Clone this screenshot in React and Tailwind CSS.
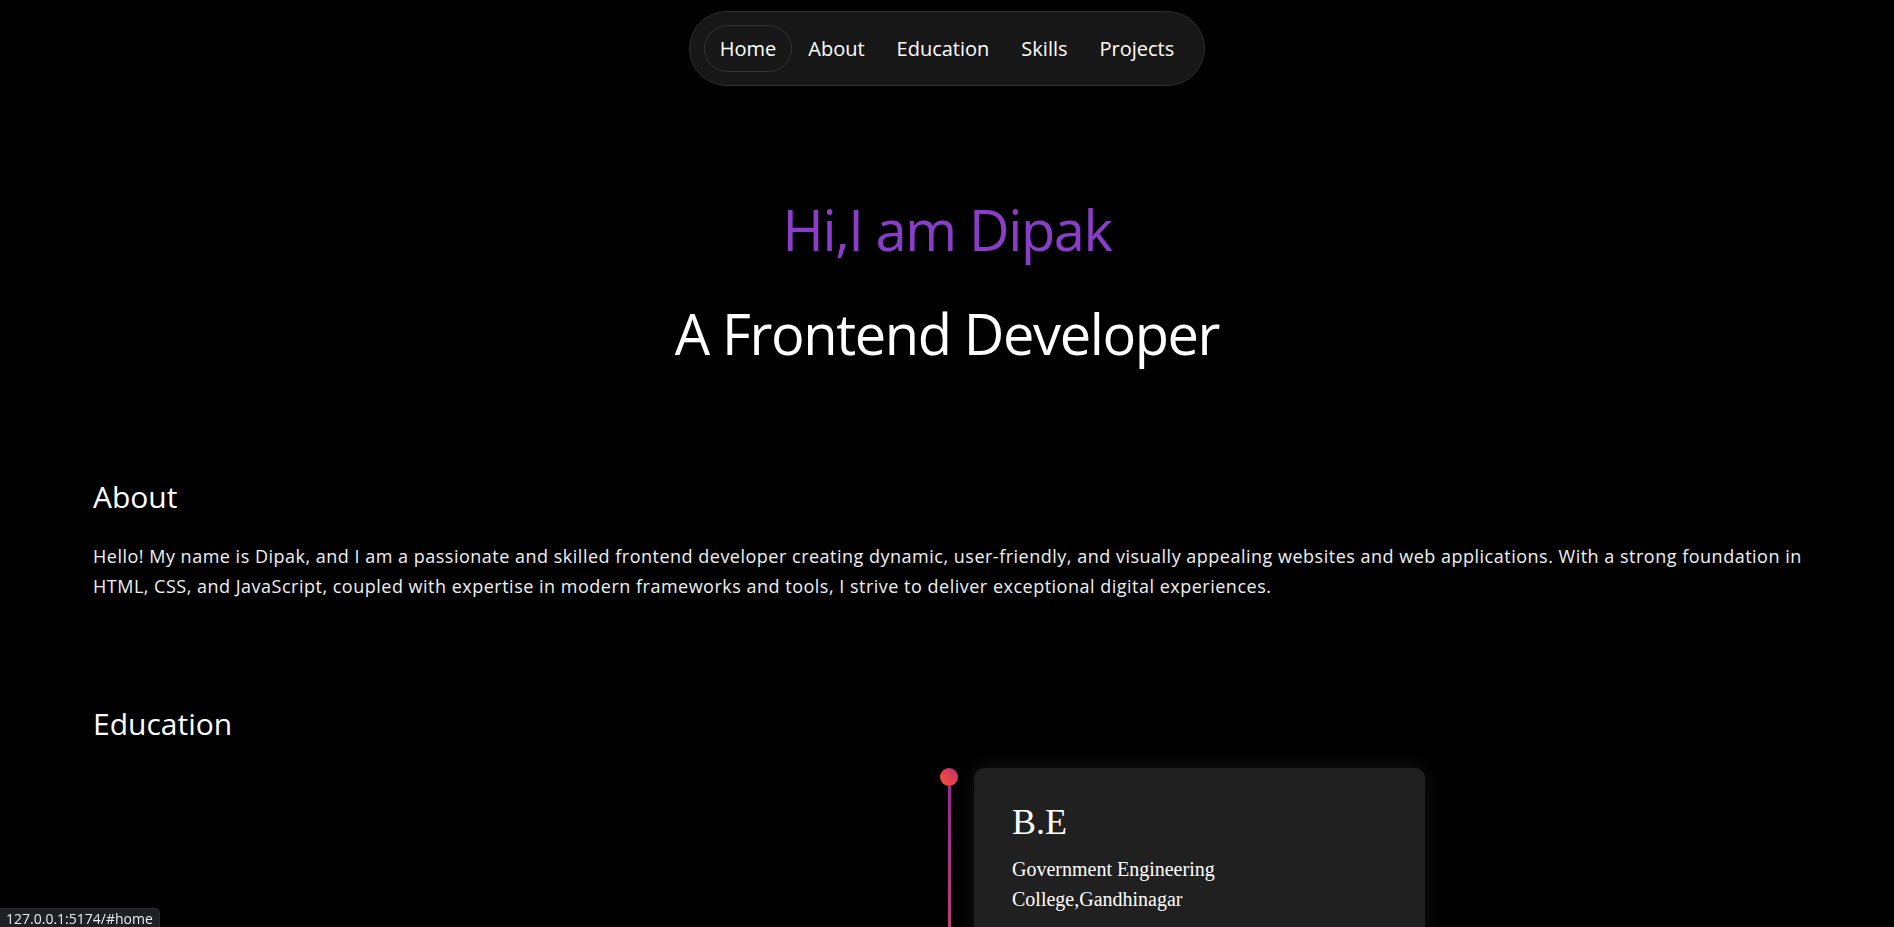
import React from 'react';

const links = ['Home', 'About', 'Education', 'Skills', 'Projects'];

const education = [
  {
    degree: 'B.E',
    school: 'Government Engineering College,Gandhinagar',
  },
];

function Navbar() {
  return (
    <div className="flex justify-center pt-[11px]">
      <ul className="flex items-center rounded-full border border-[#2e2e2e] bg-[#171717] px-[14px] py-[13px]">
        {links.map((link, i) => (
          <li key={link}>
            <a
              href={`#${link.toLowerCase()}`}
              className={`flex h-[47px] items-center rounded-full px-[15px] text-[20px] text-white ${
                i === 0 ? 'border border-[#333333]' : 'border border-transparent'
              }`}
            >
              {link}
            </a>
          </li>
        ))}
      </ul>
    </div>
  );
}

function Hero() {
  return (
    <section id="home" className="pt-[115px] text-center">
      <h1 className="text-[56px] leading-none tracking-[-1.4px] text-[#8a3dc9]">Hi,I am Dipak</h1>
      <h2 className="mt-[48px] text-[56px] leading-none tracking-[-1.4px] text-white">A Frontend Developer</h2>
    </section>
  );
}

function About() {
  return (
    <section id="about" className="pl-[93px] pr-[70px] pt-[121px]">
      <h2 className="text-[30px] leading-none text-white">About</h2>
      <p className="mt-[29px] text-[18px] leading-[30px] tracking-[0.5px] text-[#f0f0f0]">
        Hello! My name is Dipak, and I am a passionate and skilled frontend developer creating dynamic,
        user-friendly, and visually appealing websites and web applications. With a strong foundation in
        HTML, CSS, and JavaScript, coupled with expertise in modern frameworks and tools, I strive to
        deliver exceptional digital experiences.
      </p>
    </section>
  );
}

function Education() {
  return (
    <section id="education" className="px-[93px] pt-[108px]">
      <h2 className="text-[30px] leading-none text-white">Education</h2>
      <div className="mt-[29px] grid grid-cols-[1fr_18px_1fr] pl-[4px]">
        {education.map((item) => (
          <React.Fragment key={item.degree}>
            <div />
            {/* timeline rail: dot on top, gradient line below */}
            <div className="flex flex-col items-center">
              <span className="h-[18px] w-[18px] rounded-full bg-gradient-to-tr from-[#f5552c] via-[#e2404f] to-[#b82e7c]" />
              <span className="h-[300px] w-[3px] bg-gradient-to-b from-[#952a90] to-[#ee4250]" />
            </div>
            <div className="pl-[16px]">
              <div className="h-[240px] w-[451px] rounded-[10px] bg-[#202020] px-[38px] pt-[34px] font-['Liberation_Serif',serif] text-white shadow-[0_0_22px_rgba(255,255,255,0.08)]">
                <h3 className="text-[36px] leading-[40px]">{item.degree}</h3>
                <p className="mt-[12px] text-[20px] leading-[30px]">{item.school}</p>
              </div>
            </div>
          </React.Fragment>
        ))}
      </div>
    </section>
  );
}

export default function App() {
  return (
    <div className="relative h-screen overflow-hidden bg-black font-['Open_Sans','Noto_Sans',sans-serif] text-white">
      <Navbar />
      <Hero />
      <About />
      <Education />
      {/* browser link-hover status bubble */}
      <div className="fixed bottom-0 left-0 rounded-tr-[5px] border-r border-t border-[#2a2b2f] bg-[#1f2023] px-[6px] pt-[1px] text-[14px] leading-[17px] text-[#e8eaed]">
        127.0.0.1:5174/#home
      </div>
    </div>
  );
}
